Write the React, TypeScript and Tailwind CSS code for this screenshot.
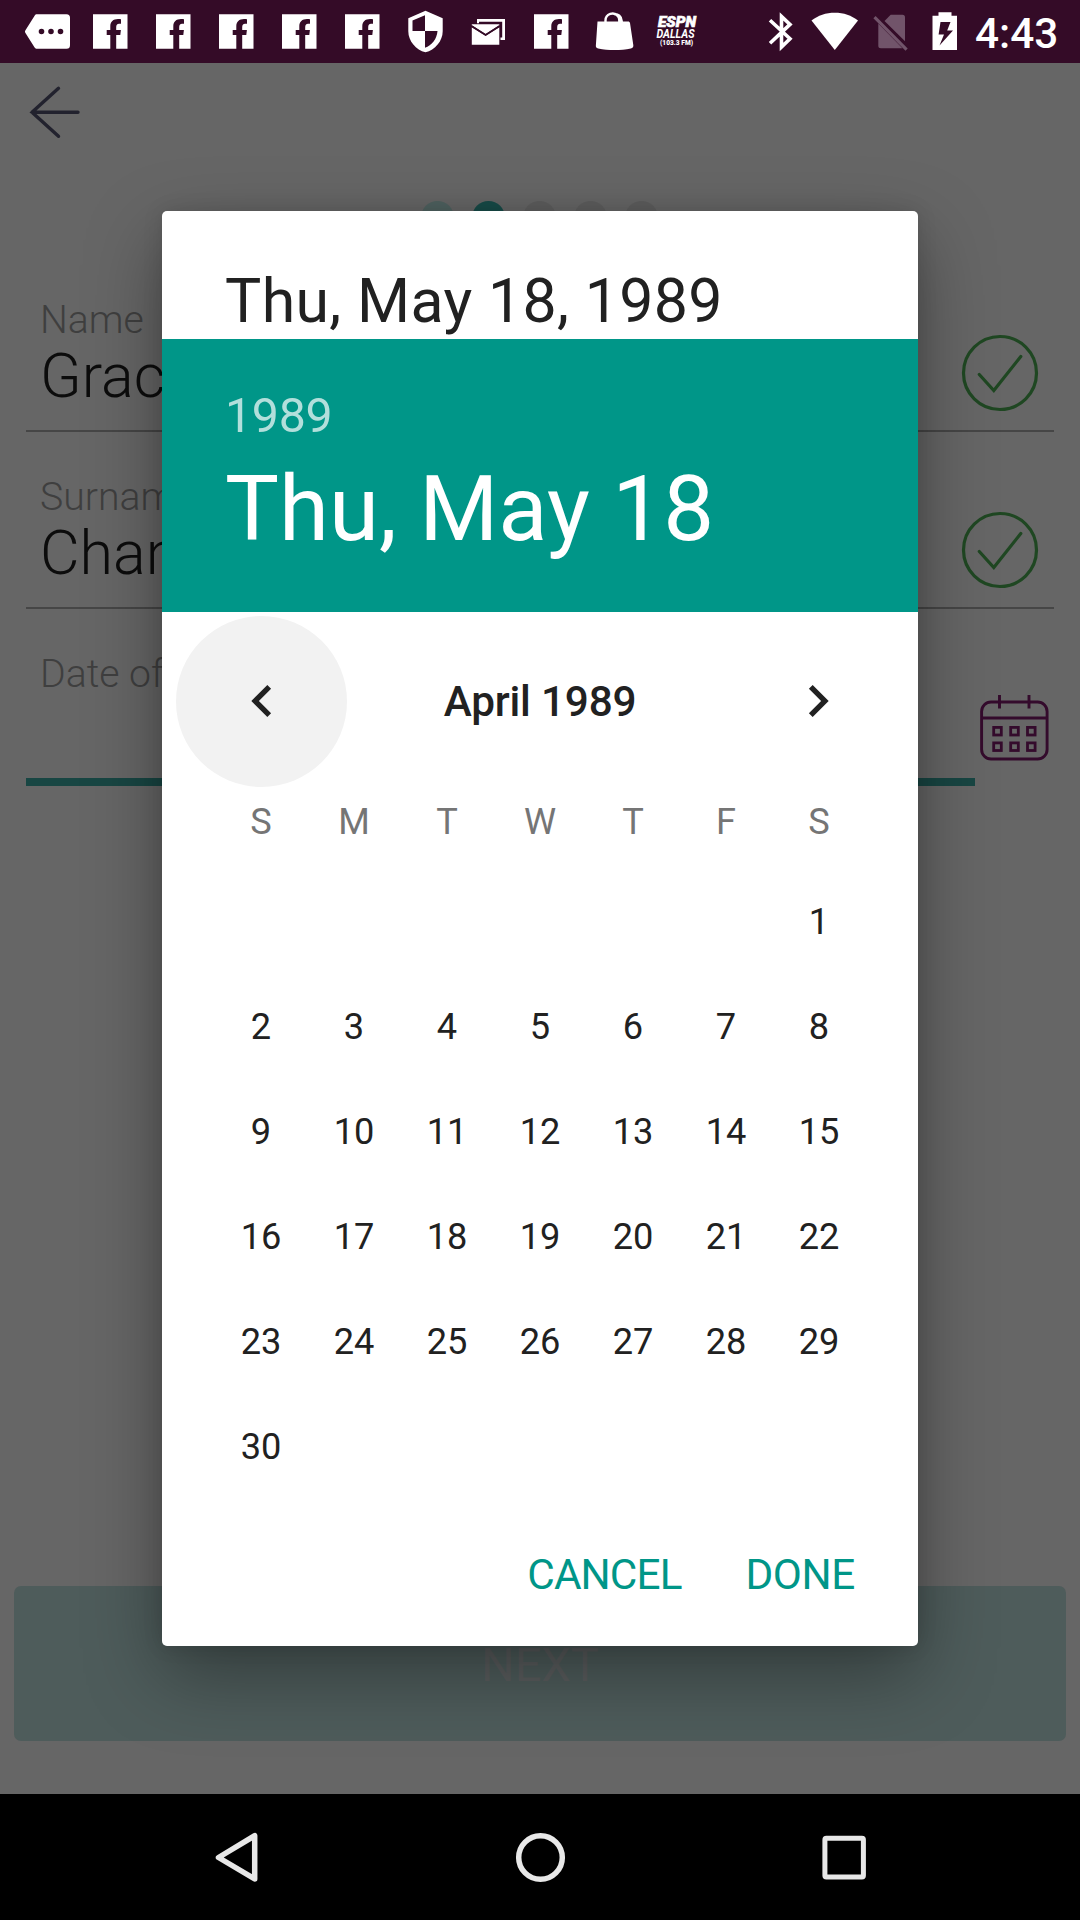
import React from "react";

const FONT = "font-['Roboto','Noto_Sans',sans-serif]";

function Slot({ children }: { children: React.ReactNode }) {
  return (
    <svg className="h-[63px] w-[63px] shrink-0" viewBox="0 0 63 63" fill="#fff">
      {children}
    </svg>
  );
}

function FacebookIcon() {
  return (
    <Slot>
      <path d="M14 14.300h34.500v34.500H37.200V35h4.100l.6-5h-4.700v-2.800c0-2.200.8-3.400 2.900-3.400h1.900v-4.600c-.8-.1-1.800-.2-3-.2-4.800 0-7.700 2.700-7.700 7.500V30h-3.600v5h3.600v13.800H14z" />
    </Slot>
  );
}

function StatusBar() {
  return (
    <header className="flex h-[63px] items-center bg-[#340b27] pl-4 text-white">
      <Slot>
        <path
          fillRule="evenodd"
          d="M21 14.300h29.500a3.500 3.500 0 0 1 3.500 3.500v27.500a3.500 3.500 0 0 1-3.500 3.500H21c-1 0-1.800-.5-2.400-1.400L9.300 32.800c-.5-.8-.5-1.600 0-2.400l9.300-14.700c.6-.9 1.400-1.400 2.400-1.400zM25.500 28.700a2.800 2.800 0 1 0 0 5.600 2.800 2.800 0 0 0 0-5.600zm9.500 0a2.800 2.800 0 1 0 0 5.600 2.800 2.800 0 0 0 0-5.600zm9.500 0a2.800 2.800 0 1 0 0 5.600 2.800 2.800 0 0 0 0-5.600z"
        />
      </Slot>
      <FacebookIcon />
      <FacebookIcon />
      <FacebookIcon />
      <FacebookIcon />
      <FacebookIcon />
      <Slot>
        <path
          fillRule="evenodd"
          d="M31.500 10.800l17.200 7.400v13C48.700 41 41 50 31.500 52.300 22 50 14.300 41 14.300 31.200v-13zM31 15.200L18.500 20.400V31H31zM31 31v16.800c6.800-2.200 12-9 12.500-16.800z"
        />
      </Slot>
      <Slot>
        <path d="M20 19h28v21h-4.500v-2.500h1.700v-15.700H22v1.500h-2z" />
        <path d="M14.800 24.300h27.500v1L28.600 34l-13.800-8.700z" />
        <path d="M14.800 27.300l13.800 8.700 13.700-8.700v17.500H14.800z" />
        <path d="M14.800 26.300l13.800 8.600 13.700-8.600" fill="none" stroke="#340b27" strokeWidth="1.600" />
      </Slot>
      <FacebookIcon />
      <Slot>
        <path d="M14.500 21.500h30.500c1.200 0 1.800.6 2 1.600l3.300 21.800c.3 2-.5 3-2.500 3.500-10 2-22.500 2-32.600 0-2-.5-2.600-1.500-2.300-3.500z" />
        <path
          d="M22.500 24v-3.500a7 7 0 0 1 12.500-4.300c1 1.300 1.300 2.700 1.300 4.300V24M31 14.200c4-.6 7.700 2 7.700 6.800v3"
          fill="none"
          stroke="#fff"
          strokeWidth="2.400"
        />
      </Slot>
      <Slot>
        <text x="12" y="27" fontFamily="Roboto" fontWeight="900" fontStyle="italic" fontSize="14" textLength="38" lengthAdjust="spacingAndGlyphs" stroke="#fff" strokeWidth=".6">
          ESPN
        </text>
        <text x="10.500" y="37.800" fontFamily="Roboto" fontWeight="700" fontStyle="italic" fontSize="13" textLength="38" lengthAdjust="spacingAndGlyphs">
          DALLAS
        </text>
        <text x="14" y="45" fontFamily="Roboto" fontWeight="900" fontSize="6.500" textLength="33" lengthAdjust="spacingAndGlyphs">
          {"(103.3 FM)"}
        </text>
      </Slot>
      <svg className="ml-[41px] h-[63px] w-[52px] shrink-0" viewBox="0 0 52 63">
        <path
          d="M20 20.200l20 18.600-8.500 8.300V16.400L40 24.400 20 43.300"
          fill="none"
          stroke="#fff"
          strokeWidth="3.600"
        />
      </svg>
      <svg className="h-[63px] w-[66px] shrink-0" viewBox="0 0 66 63">
        <path d="M9.500 20.500C16 15.300 24 12.700 32.800 12.700S49.500 15.300 56 20.500L32.800 50z" fill="#fff" />
      </svg>
      <svg className="h-[63px] w-[46px] shrink-0" viewBox="0 0 46 63" fill="#71546a">
        <path d="M16.500 21l6.200-6.200h11.800a2.500 2.500 0 0 1 2.500 2.500v24z" />
        <path d="M10.300 23.500L34.500 48.200H12.800a2.500 2.500 0 0 1-2.500-2.500z" />
        <path d="M7.600 16.100l-2.200 2.200L37.500 50.800l2.200-2.200z" />
      </svg>
      <svg className="h-[63px] w-[60px] shrink-0" viewBox="0 0 60 63">
        <path
          fillRule="evenodd"
          d="M24.500 12.200h13v3.600h5.500V50H18.500V15.800h6zM26.500 22L24.600 34.500h5.400L25.500 45.500 39 30.500h-5.800L36.500 22z"
          fill="#fff"
        />
      </svg>
      <span className="mt-[3px] ml-[1px] text-[42.300px] leading-[63px] font-medium">4:43</span>
    </header>
  );
}

function CheckIcon() {
  return (
    <svg className="h-20 w-20" viewBox="0 0 80 80" fill="none" stroke="#1f4722" strokeWidth="3.200">
      <circle cx="40" cy="40" r="36.500" />
      <path d="M19.300 41.500L33.800 57.500 60.800 23.500" strokeLinecap="round" />
    </svg>
  );
}

function CalendarIcon() {
  return (
    <svg className="h-[80px] w-[80px]" viewBox="975 690 80 80" fill="none" stroke="#340b2c" strokeWidth="2.900">
      <rect x="981.600" y="702" width="65.500" height="57" rx="9.500" />
      <path d="M981.600 718h65.500M999.500 695v13.500M1029 695v13.500" />
      {[731.2, 746.7].map((y) =>
        [997.5, 1014.5, 1031.3].map((x) => (
          <rect key={`${x}-${y}`} x={x - 3.8} y={y - 3.8} width="7.600" height="7.600" strokeWidth="2.800" />
        )),
      )}
    </svg>
  );
}

function Field({ label, value }: { label: string; value: string }) {
  return (
    <div className="mx-[26px] flex h-[177px] items-end justify-between border-b-2 border-[#464646] pl-[14px] font-light">
      <div className="flex flex-col pb-[18px]">
        <span className="text-[39.200px] leading-[46px] text-[#3f3f3f]">{label}</span>
        <span className="-mt-[2px] text-[61px] leading-[71px] text-[#0c0c0c]">{value}</span>
      </div>
      <div className="mr-[14px] mb-[17px]">
        <CheckIcon />
      </div>
    </div>
  );
}

function FormScreen() {
  return (
    <main className="flex h-[1731px] flex-col bg-[#666]">
      <div className="h-[98px] shrink-0">
        <svg className="h-[98px] w-[110px]" viewBox="0 63 110 98" fill="none" stroke="#22222e" strokeWidth="3.400" strokeLinecap="round">
          <path d="M32 112.300H78M58.500 88.300L32 112.300 58.500 136.300" />
        </svg>
      </div>
      <div className="mt-[40px] mr-[2px] flex h-[33px] shrink-0 justify-center gap-[18px]">
        <span className="w-[33px] rounded-full bg-[#4f6260]" />
        <span className="w-[33px] rounded-full bg-[#174b48]" />
        <span className="w-[33px] rounded-full bg-[#5e5e5e]" />
        <span className="w-[33px] rounded-full bg-[#5e5e5e]" />
        <span className="w-[33px] rounded-full bg-[#5e5e5e]" />
      </div>
      <div className="mt-[21px] shrink-0">
        <Field label="Name" value="Grace" />
        <Field label="Surname" value="Chan" />
        <div className="flex h-[177px] items-end pl-[26px]">
          <div className="flex h-[177px] w-[949px] flex-col border-b-[8px] border-[#184643] pt-[42px] pl-[14px]">
            <span className="text-[39.200px] leading-[46px] font-light text-[#3f3f3f]">Date of birth</span>
          </div>
          <div className="mb-[16px]">
            <CalendarIcon />
          </div>
        </div>
      </div>
      <button className="mx-[14px] mt-auto mb-[53px] h-[155px] rounded-[7px] bg-[#4e5c5b] pt-[3px] text-[47px] text-[#5a5d5e]">NEXT</button>
    </main>
  );
}

const WEEKDAYS = ["S", "M", "T", "W", "T", "F", "S"];
const DAYS = Array.from({ length: 30 }, (_, i) => i + 1);

function DateDialog() {
  return (
    <section className="absolute top-[211px] left-[162px] flex h-[1435px] w-[756px] flex-col overflow-hidden rounded-[5px] bg-white text-[#212121]">
      <h1 className="h-[128px] pt-[55px] pl-[63px] text-[60.800px] leading-[71px] tracking-[0.35px]">Thu, May 18, 1989</h1>
      <div className="flex h-[273px] flex-col bg-[#009688] pt-[49px] pl-[63px]">
        <span className="text-[48.300px] leading-[56px] tracking-[-0.3px] text-[#b2dfdb]">1989</span>
        <span className="mt-[12px] text-[90.600px] leading-[106px] text-white">Thu, May 18</span>
      </div>
      <div className="flex h-[178px] items-center justify-between px-[14px]">
        <button className="flex h-[171px] w-[171px] items-center justify-center rounded-full bg-[#f2f2f2]">
          <svg className="h-16 w-16" viewBox="0 0 24 24" fill="#212121">
            <path d="M15.410 7.410L14 6l-6 6 6 6 1.410-1.410L10.830 12z" />
          </svg>
        </button>
        <span className="pt-[1px] text-[42.300px] font-medium tracking-[-0.2px]">April 1989</span>
        <button className="flex h-[171px] w-[171px] items-center justify-center">
          <svg className="h-16 w-16" viewBox="0 0 24 24" fill="#212121">
            <path d="M10 6L8.590 7.410 13.170 12l-4.580 4.590L10 18l6-6z" />
          </svg>
        </button>
      </div>
      <div className="mx-[52.500px] mt-[1px] grid h-[63px] grid-cols-7 items-center text-center text-[36.200px] text-[#757575]">
        {WEEKDAYS.map((d, i) => (
          <span key={i}>{d}</span>
        ))}
      </div>
      <div className="mx-[52.500px] mt-[16px] grid auto-rows-[105px] grid-cols-7 items-center text-center text-[36.200px]">
        {DAYS.map((d) => (
          <span key={d} className="first:col-start-7">
            {d}
          </span>
        ))}
      </div>
      <div className="mt-auto mr-[63px] mb-[46px] flex justify-end gap-[64px] text-[42.300px] leading-[50px] text-[#009688]">
        <button className="tracking-[-0.900px]">CANCEL</button>
        <button className="tracking-[-0.400px]">DONE</button>
      </div>
    </section>
  );
}

function NavBar() {
  return (
    <nav className="flex h-[126px] items-center justify-center gap-[223px] bg-black">
      <svg className="h-20 w-20" viewBox="0 0 80 80" fill="none" stroke="#e8e8e8" strokeWidth="5.500" strokeLinejoin="round">
        <path d="M21.500 40.500L57.700 18.700V62z" />
      </svg>
      <svg className="h-20 w-20" viewBox="0 0 80 80" fill="none" stroke="#e8e8e8" strokeWidth="5.500">
        <circle cx="40.500" cy="40.500" r="21.800" />
      </svg>
      <svg className="h-20 w-20" viewBox="0 0 80 80" fill="none" stroke="#e8e8e8" strokeWidth="5">
        <rect x="21.900" y="21.200" width="38.500" height="38.800" rx="1.500" />
      </svg>
    </nav>
  );
}

export default function App() {
  return (
    <div className={`${FONT} relative h-[1920px] w-[1080px] overflow-hidden bg-black`}>
      <StatusBar />
      <FormScreen />
      <NavBar />
      <div className="absolute top-[211px] left-[162px] h-[1435px] w-[756px] rounded-[5px] shadow-[0_0_20px_rgba(0,0,0,0.12),0_28px_76px_rgba(0,0,0,0.36)]" />
      <DateDialog />
    </div>
  );
}
